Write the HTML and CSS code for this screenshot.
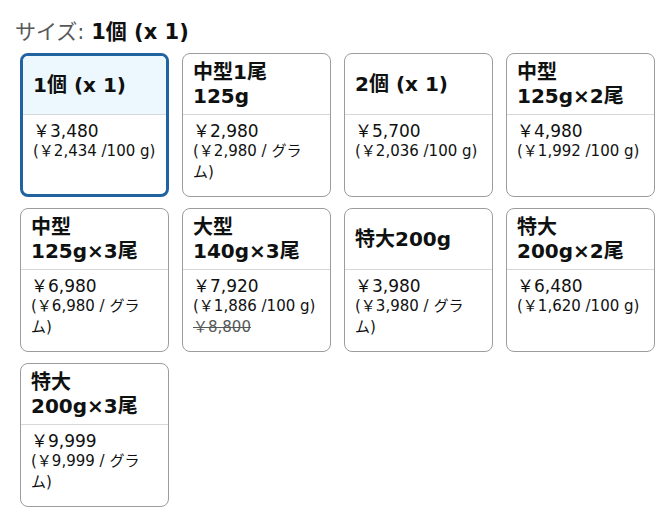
FILE: index.html
```html
<!DOCTYPE html>
<html lang="ja">
<head>
    <meta charset="UTF-8">
    <meta name="viewport" content="width=device-width, initial-scale=1.0">
    <title>サイズ</title>
    <link rel="stylesheet" href="styles.css">
</head>
<body>
    <!-- 選択中のサイズ -->
    <div class="selecao">
        <span class="rotulo">サイズ:</span>
        <span class="valor">1個 (x 1)</span>
    </div>

    <!-- サイズの一覧 -->
    <div class="grade">
        <div class="cartao ativo">
            <div class="topo">1個 (x 1)</div>
            <div class="corpo">
                <div class="preco">￥3,480</div>
                <div class="unidade">(￥2,434 /100 g)</div>
            </div>
        </div>
        <div class="cartao">
            <div class="topo">中型1尾<br>125g</div>
            <div class="corpo">
                <div class="preco">￥2,980</div>
                <div class="unidade">(￥2,980 / グラム)</div>
            </div>
        </div>
        <div class="cartao">
            <div class="topo">2個 (x 1)</div>
            <div class="corpo">
                <div class="preco">￥5,700</div>
                <div class="unidade">(￥2,036 /100 g)</div>
            </div>
        </div>
        <div class="cartao">
            <div class="topo">中型<br>125g×2尾</div>
            <div class="corpo">
                <div class="preco">￥4,980</div>
                <div class="unidade">(￥1,992 /100 g)</div>
            </div>
        </div>
        <div class="cartao">
            <div class="topo">中型<br>125g×3尾</div>
            <div class="corpo">
                <div class="preco">￥6,980</div>
                <div class="unidade">(￥6,980 / グラム)</div>
            </div>
        </div>
        <div class="cartao">
            <div class="topo">大型<br>140g×3尾</div>
            <div class="corpo">
                <div class="preco">￥7,920</div>
                <div class="unidade">(￥1,886 /100 g)</div>
                <div class="antigo">￥8,800</div>
            </div>
        </div>
        <div class="cartao">
            <div class="topo">特大200g</div>
            <div class="corpo">
                <div class="preco">￥3,980</div>
                <div class="unidade">(￥3,980 / グラム)</div>
            </div>
        </div>
        <div class="cartao">
            <div class="topo">特大<br>200g×2尾</div>
            <div class="corpo">
                <div class="preco">￥6,480</div>
                <div class="unidade">(￥1,620 /100 g)</div>
            </div>
        </div>
        <div class="cartao">
            <div class="topo">特大<br>200g×3尾</div>
            <div class="corpo">
                <div class="preco">￥9,999</div>
                <div class="unidade">(￥9,999 / グラム)</div>
            </div>
        </div>
    </div>
</body>
</html>
```

FILE: styles.css
```css
/* Estilos gerais */
body {
    margin: 0;
    padding: 20px 0 0 15px;
    font-family: "DejaVu Sans", "Noto Sans CJK JP", sans-serif;
    color: #0f1111;
    background-color: #fff;
}

/* Linha da seleção */
.selecao {
    font-size: 21px;
    line-height: 24px;
    margin-bottom: 9px;
}

.selecao .rotulo {
    color: #565959;
}

.selecao .valor {
    font-weight: bold;
}

/* Grade de cartões */
.grade {
    display: grid;
    grid-template-columns: repeat(4, 149px);
    grid-auto-rows: 144px;
    column-gap: 13px;
    row-gap: 11px;
    margin-left: 5px;
}

.cartao {
    box-sizing: border-box;
    border: 1px solid #9a9d9f;
    border-radius: 8px;
    overflow: hidden;
    display: flex;
    flex-direction: column;
}

.cartao .topo {
    box-sizing: border-box;
    height: 61px;
    padding: 0 10px;
    display: flex;
    align-items: center;
    font-size: 20px;
    font-weight: bold;
    line-height: 24px;
    border-bottom: 1px solid #d5d9d9;
}

.cartao .corpo {
    padding: 6px 10px 0;
}

.preco {
    font-size: 17px;
    line-height: 20px;
}

.unidade {
    font-size: 15px;
    line-height: 21px;
}

.antigo {
    font-size: 15px;
    line-height: 20px;
    color: #565959;
    text-decoration: line-through;
}

/* Cartão selecionado */
.cartao.ativo {
    border: 3px solid #2162a1;
}

.cartao.ativo .topo {
    height: 59px;
    background-color: #edf8fe;
}
```
